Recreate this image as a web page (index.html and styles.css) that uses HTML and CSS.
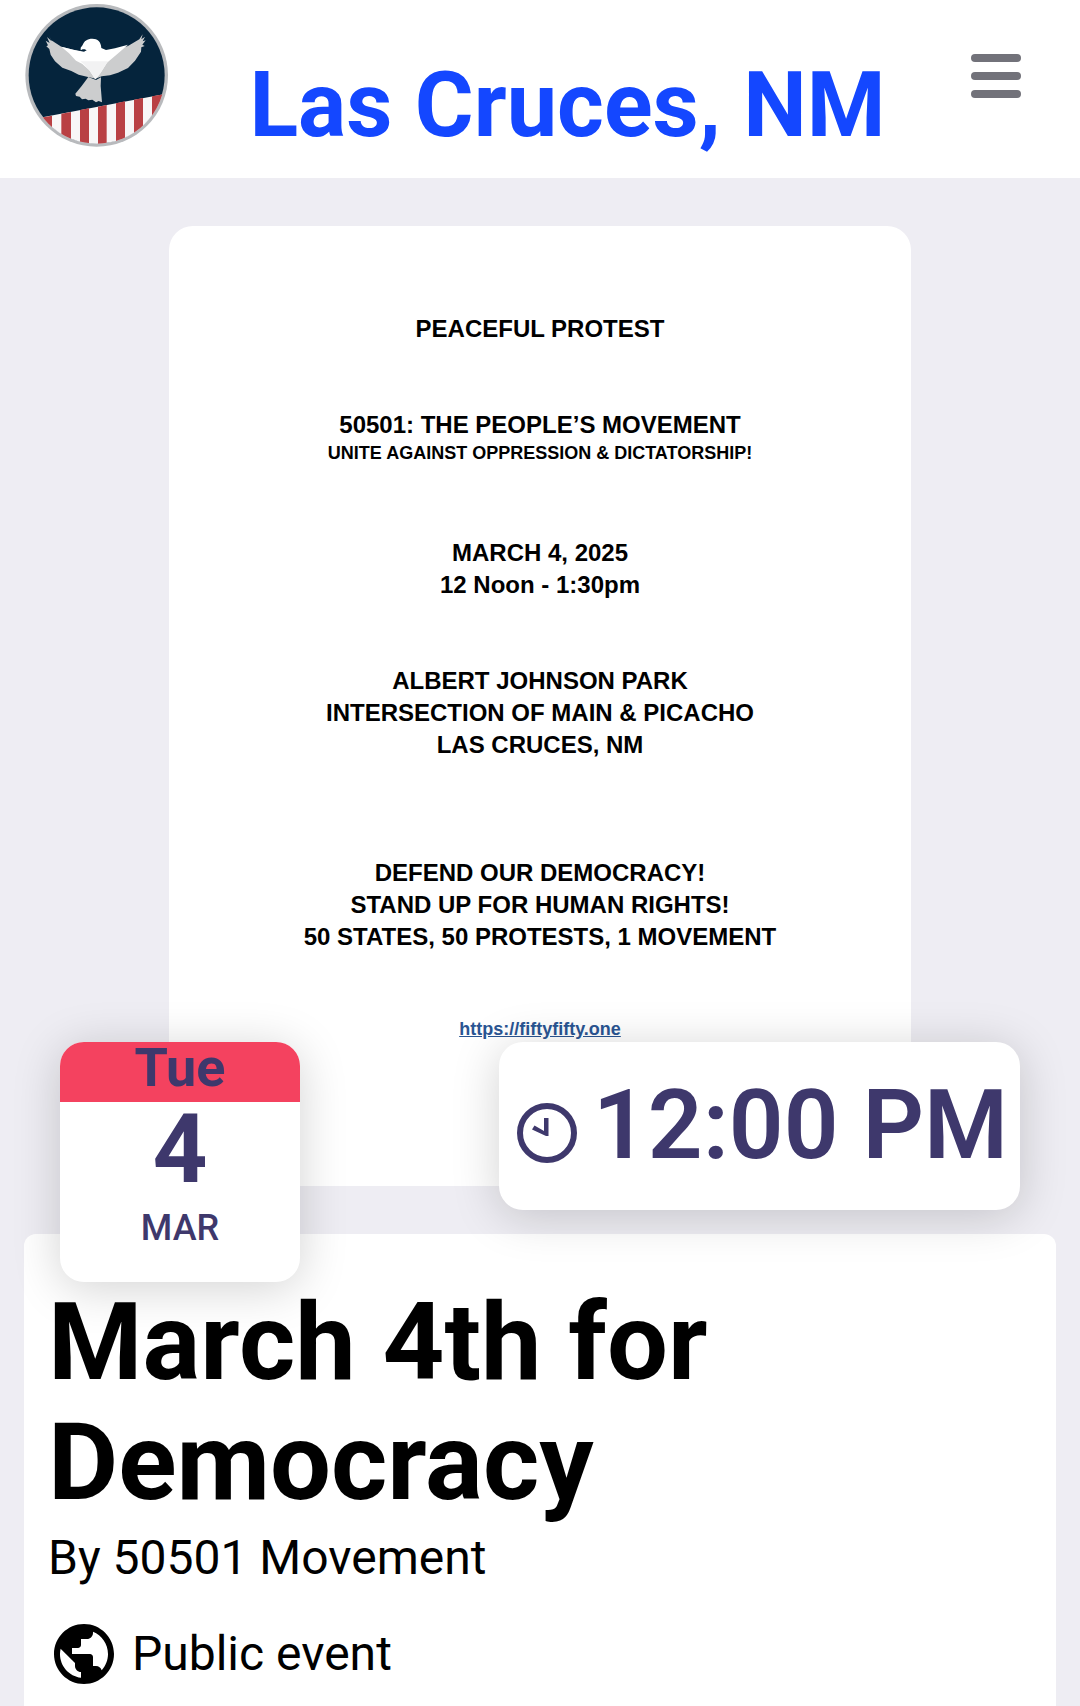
FILE: index.html
```html
<!DOCTYPE html>
<html lang="en">
<head>
<meta charset="utf-8">
<meta name="viewport" content="width=device-width, initial-scale=1">
<title>March 4th for Democracy</title>
<link rel="stylesheet" href="styles.css">
</head>
<body>
<header class="topbar">
  <a class="logo" href="#" aria-label="Home">
    <svg viewBox="72 12 432 432" aria-hidden="true">
      <defs><clipPath id="disc"><circle cx="290" cy="226" r="205"/></clipPath></defs>
      <circle cx="290" cy="226" r="214" fill="#b8babd"/>
      <circle cx="290" cy="226" r="204" fill="#05243c"/>
      <g clip-path="url(#disc)">
        <path fill="#f8f6f7" d="M80 361L500 281V440H80Z"/>
        <path fill="#b94044" d="M80 361L156 347V440H80ZM184 341L213 336V440H184ZM240 330L267 325V440H240ZM294 320L320 315V440H294ZM348 310L375 304V440H348ZM402 299L429 294V440H402ZM456 289L500 281V440H456Z"/>
      </g>
      <path fill="#cccdce" d="M146 105L154 121L184 140L246 156L262 180L287 236L264 231L236 224L214 213L187 203L165 184L152 164L148 147L139 139L144 136L137 122L149 129L141 111L155 124Z"/>
      <path fill="#cccdce" d="M428 103L418 118L384 138L325 156L306 187L287 236L305 229L330 226L354 218L384 204L405 182L423 155L424 142L434 138L427 134L437 121L428 124L435 110L424 118Z"/>
      <path fill="#cccdce" d="M265 231L288 240L303 232L302 258L306 307L296 303L288 307L277 299L265 301L257 296L246 298L239 290L228 288L226 281L245 258Z"/>
      <path fill="#fff" d="M184 140L220 149L252 155L260 151L254 148L248 148L242 151L242 143L248 135C252 123 262 116 277 116C293 116 303 125 304 144L318 150L345 145L384 134L352 162L321 188L300 221L286 238L268 211L246 191L228 182L207 160Z"/>
      <path fill="#f2f2f3" d="M241 184L324 184L300 221L286 238L268 211L252 193Z"/>
    </svg>
  </a>
  <h2 class="place">Las Cruces, NM</h2>
  <button class="menu" type="button" aria-label="Menu">
    <span class="bar"></span><span class="bar"></span><span class="bar"></span>
  </button>
</header>

<main class="page">
  <section class="flyer">
    <p>PEACEFUL PROTEST</p>
    <div class="what">
      <p>50501: THE PEOPLE’S MOVEMENT</p>
      <p class="small">UNITE AGAINST OPPRESSION &amp; DICTATORSHIP!</p>
    </div>
    <div class="when">
      <p>MARCH 4, 2025</p>
      <p>12 Noon - 1:30pm</p>
    </div>
    <div class="where">
      <p>ALBERT JOHNSON PARK</p>
      <p>INTERSECTION OF MAIN &amp; PICACHO</p>
      <p>LAS CRUCES, NM</p>
    </div>
    <div class="why">
      <p>DEFEND OUR DEMOCRACY!</p>
      <p>STAND UP FOR HUMAN RIGHTS!</p>
      <p>50 STATES, 50 PROTESTS, 1 MOVEMENT</p>
    </div>
    <p class="link small"><a href="https://fiftyfifty.one">https://fiftyfifty.one</a></p>
  </section>

  <div class="badges">
    <div class="date">
      <div class="weekday">Tue</div>
      <div class="day">4</div>
      <div class="month">MAR</div>
    </div>
    <div class="time">
      <svg class="clock" viewBox="0 0 60 60" aria-hidden="true">
        <circle cx="30" cy="30" r="27" fill="none" stroke="currentColor" stroke-width="6"/>
        <path fill="currentColor" d="M27 15H31.5V33H29L15 26.5L17.5 22.5L27 28Z"/>
      </svg>
      <span>12:00 PM</span>
    </div>
  </div>

  <section class="event">
    <h1 class="title">March 4th for Democracy</h1>
    <p class="host">By 50501 Movement</p>
    <p class="access">
      <svg class="globe" viewBox="0 0 24 24" aria-hidden="true"><path d="M12 2C6.480 2 2 6.480 2 12s4.480 10 10 10 10-4.480 10-10S17.520 2 12 2zm-1 17.930c-3.950-.49-7-3.850-7-7.930 0-.62.08-1.210.21-1.790L9 15v1c0 1.100.9 2 2 2v1.930zm6.900-2.540c-.26-.81-1-1.390-1.900-1.390h-1v-3c0-.55-.45-1-1-1H8v-2h2c.55 0 1-.45 1-1V7h2c1.100 0 2-.9 2-2v-.41c2.930 1.190 5 4.060 5 7.410 0 2.080-.8 3.970-2.100 5.390z"/></svg>
      <span>Public event</span>
    </p>
  </section>
</main>
</body>
</html>
```
FILE: styles.css
```css
* {
  box-sizing: border-box;
}

body {
  margin: 0;
  min-height: 100vh;
  display: flex;
  flex-direction: column;
  background: #eeedf3;
  color: #000;
  font-family: Roboto, sans-serif;
}

h1, h2, p {
  margin: 0;
}

.topbar {
  display: flex;
  align-items: center;
  padding: 4px 47px 30px 24px;
  background: #fff;
}

.logo,
.logo svg {
  display: block;
  width: 144px;
  height: 144px;
}

.place {
  flex: 1;
  align-self: flex-end;
  padding-left: 8px;
  color: #1447ff;
  font-size: 90px;
  font-weight: 700;
  line-height: 84px;
  text-align: center;
}

.menu {
  display: flex;
  flex-direction: column;
  gap: 10px;
  padding: 12px;
  border: 0;
  background: none;
}

.bar {
  width: 50px;
  height: 8px;
  border-radius: 4px;
  background: #72727a;
}

.page {
  flex: 1;
  display: flex;
  flex-direction: column;
  padding: 48px 24px 0;
}

.flyer {
  align-self: center;
  width: 100%;
  max-width: 742px;
  min-height: 960px;
  padding: 87px 24px 144px;
  border-radius: 24px;
  background: #fff;
  color: #000;
  font-family: "Liberation Sans", Arial, sans-serif;
  font-size: 24px;
  font-weight: 700;
  line-height: 32px;
  text-align: center;
}

.small {
  font-size: 18px;
  line-height: 24px;
}

.what,
.where,
.link {
  margin-top: 64px;
}

.when {
  margin-top: 72px;
}

.why {
  margin-top: 96px;
}

.link a {
  color: #2a5593;
}

.badges {
  position: relative;
  display: flex;
  justify-content: space-between;
  align-items: flex-start;
  margin-top: -144px;
  padding: 0 36px;
  color: #3e386c;
}

.date,
.time {
  border-radius: 24px;
  background: #fff;
  box-shadow: 0 6px 48px rgba(0, 0, 0, 0.18);
}

.date {
  width: 240px;
  height: 240px;
  text-align: center;
}

.weekday {
  height: 60px;
  border-radius: 24px 24px 0 0;
  background: #f4425f;
  font-size: 54px;
  font-weight: 700;
  line-height: 52px;
}

.day {
  font-size: 96px;
  font-weight: 700;
  line-height: 94px;
}

.month {
  font-size: 36px;
  font-weight: 500;
  line-height: 64px;
}

.time {
  display: flex;
  align-items: center;
  gap: 16px;
  padding: 23px 12px 25px 18px;
  font-size: 96px;
  font-weight: 600;
  line-height: 120px;
}

.clock {
  width: 60px;
  height: 60px;
  margin-top: 16px;
}

.event {
  flex: 1;
  margin-top: -48px;
  padding: 48px 24px 16px;
  border-radius: 12px 12px 0 0;
  background: #fff;
}

.title {
  font-size: 108px;
  font-weight: 700;
  line-height: 120px;
}

.host,
.access {
  font-size: 48px;
  line-height: 72px;
}

.access {
  display: flex;
  align-items: center;
  gap: 12px;
  margin-top: 24px;
}

.globe {
  width: 72px;
  height: 72px;
}
```
